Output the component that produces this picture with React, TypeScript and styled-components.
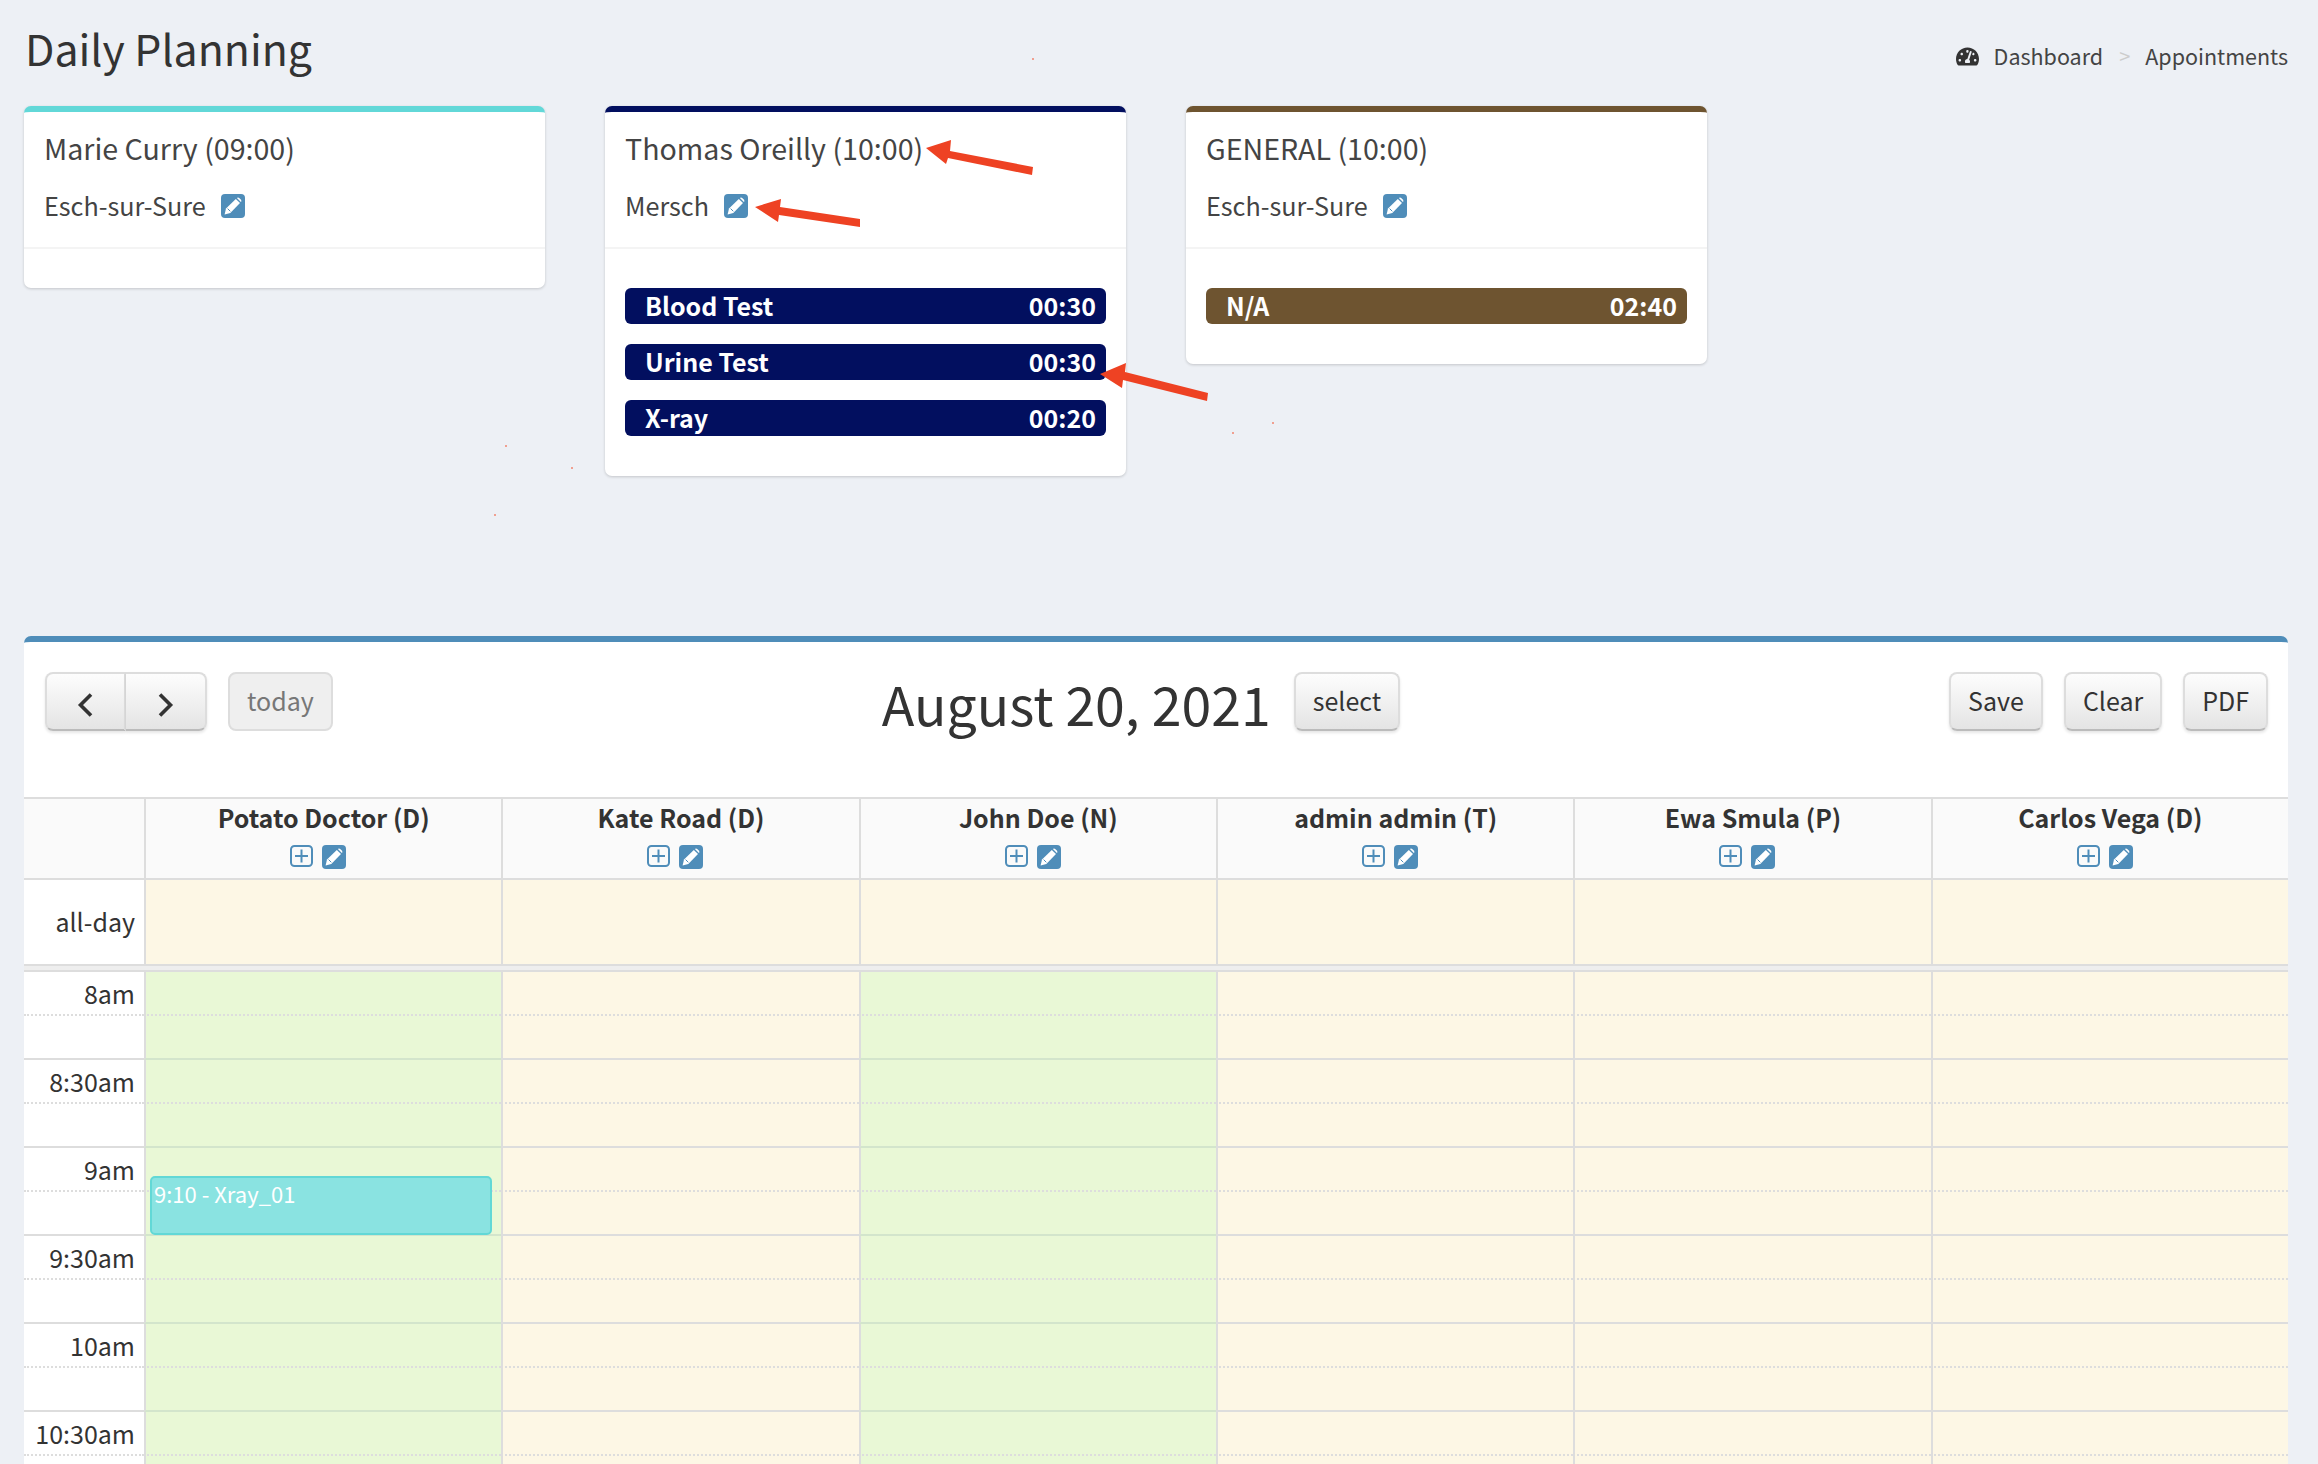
import React from "react";
import styled, { createGlobalStyle } from "styled-components";
import { FaTachometerAlt } from "react-icons/fa";

const GlobalStyle = createGlobalStyle`
  html, body {
    margin: 0;
    height: 1464px;
    overflow: hidden;
    background: #edf0f5;
    font-family: "Noto Sans CJK SC", "Noto Sans", sans-serif;
    color: #333;
  }
`;

const Page = styled.div`
  position: relative;
  width: 2318px;
  height: 1464px;
  overflow: hidden;
  padding: 0 30px 0 24px;
  box-sizing: border-box;
`;

const Header = styled.div`
  display: flex;
  justify-content: space-between;
  height: 106px;
`;

const Title = styled.h1`
  margin: 0;
  padding: 17px 0 0 1px;
  font-size: 42.8px;
  line-height: 60px;
  font-weight: 400;
  color: #333;
`;

const Breadcrumb = styled.div`
  display: flex;
  align-items: center;
  height: 32px;
  margin-top: 40px;
  font-size: 21.5px;
  line-height: 32px;
  color: #444;
  svg {
    font-size: 23px;
    margin-right: 15px;
    color: #333;
  }
`;

const Separator = styled.span`
  margin: 0 15px 0 16px;
  color: #ccc;
  font-size: 20px;
`;

const CardRow = styled.div`
  display: flex;
  align-items: flex-start;
  gap: 60px;
  height: 530px;
`;

const Card = styled.div<{ $color: string }>`
  width: 521px;
  background: #fff;
  border-top: 6px solid ${(p) => p.$color};
  border-radius: 7px;
  box-shadow: 0 1px 3px rgba(0, 0, 0, 0.18);
  box-sizing: border-box;
`;

const CardHead = styled.div`
  padding: 18px 20px 24px;
  border-bottom: 2px solid #f4f4f4;
`;

const CardName = styled.div`
  font-size: 28.6px;
  line-height: 36px;
  color: #444;
`;

const CardPlace = styled.div`
  display: flex;
  align-items: center;
  gap: 15px;
  margin-top: 21px;
  font-size: 25.2px;
  line-height: 36px;
  color: #444;
  svg {
    position: relative;
    top: 1px;
  }
`;

const CardEmpty = styled.div`
  height: 39px;
`;

const PillList = styled.div`
  display: flex;
  flex-direction: column;
  gap: 20px;
  padding: 39px 20px 40px;
`;

const Pill = styled.div<{ $color: string }>`
  display: flex;
  justify-content: space-between;
  align-items: center;
  height: 36px;
  padding: 0 10px 3px 20px;
  box-sizing: border-box;
  background: ${(p) => p.$color};
  border-radius: 6px;
  color: #fff;
  font-size: 25px;
  font-weight: 700;
`;

const Calendar = styled.div`
  background: #fff;
  border-top: 6px solid #4f8db9;
  border-radius: 7px 7px 0 0;
`;

const Toolbar = styled.div`
  display: flex;
  justify-content: space-between;
  align-items: flex-start;
  height: 155px;
  padding: 30px 20px 0 21px;
  box-sizing: border-box;
`;

const ToolGroup = styled.div`
  display: flex;
  gap: 21px;
`;

const Button = styled.div<{ $off?: boolean }>`
  display: flex;
  align-items: center;
  justify-content: center;
  height: 59px;
  padding: 0 17px 4px;
  box-sizing: border-box;
  border: 2px solid #ddd;
  border-bottom-color: ${(p) => (p.$off ? "#ddd" : "#bbb")};
  border-radius: 8px;
  font-size: 25px;
  line-height: 32px;
  color: ${(p) => (p.$off ? "#777" : "#333")};
  background: ${(p) =>
    p.$off ? "#efefef" : "linear-gradient(#fdfdfd, #e4e4e4)"};
  box-shadow: ${(p) => (p.$off ? "none" : "0 2px 3px rgba(0, 0, 0, 0.1)")};
`;

const NavGroup = styled.div`
  display: flex;
`;

const NavButton = styled(Button)<{ $side: "left" | "right" }>`
  width: 81px;
  padding: 6px 0 0;
  border-radius: ${(p) => (p.$side === "left" ? "8px 0 0 8px" : "0 8px 8px 0")};
  border-left-width: ${(p) => (p.$side === "left" ? "2px" : "0")};
`;

const CenterGroup = styled.div`
  display: flex;
  align-items: flex-start;
  gap: 23px;
`;

const DateTitle = styled.h2`
  margin: 0;
  font-size: 53.6px;
  line-height: 62px;
  font-weight: 400;
  color: #333;
`;

const GridRow = styled.div`
  display: grid;
  grid-template-columns: 120px repeat(6, 1fr);
`;

const HeadRow = styled(GridRow)`
  height: 83px;
  box-sizing: border-box;
  background: #fafafa;
  border-top: 2px solid #ddd;
  border-bottom: 2px solid #ddd;
`;

const HeadCell = styled.div`
  display: flex;
  flex-direction: column;
  align-items: center;
  border-left: 2px solid #ddd;
  padding-top: 1px;
`;

const DoctorName = styled.div`
  font-size: 25px;
  line-height: 34px;
  font-weight: 700;
  color: #333;
`;

const HeadIcons = styled.div`
  display: flex;
  align-items: flex-start;
  gap: 9px;
  margin: 11px 11px 0 0;
`;

const AllDayRow = styled(GridRow)`
  height: 84px;
  box-sizing: border-box;
`;

const Gutter = styled.div`
  height: 8px;
  box-sizing: border-box;
  background: #eee;
  border-top: 2px solid #ddd;
  border-bottom: 2px solid #ddd;
`;

const TimeLabel = styled.div<{ $minor?: boolean; $major?: boolean }>`
  padding-right: 9px;
  text-align: right;
  font-size: 25px;
  line-height: 42px;
  color: #333;
  box-sizing: border-box;
  border-bottom: ${(p) =>
    p.$minor ? "2px dotted #ddd" : p.$major ? "2px solid #ddd" : "none"};
`;

const AllDayLabel = styled(TimeLabel)`
  line-height: 82px;
`;

const SlotRow = styled(GridRow)`
  height: 44px;
`;

const SlotCell = styled.div<{ $open: boolean; $line?: "minor" | "major" }>`
  position: relative;
  box-sizing: border-box;
  border-left: 2px solid #ddd;
  background: ${(p) => (p.$open ? "#e9f8d6" : "#fdf7e5")};
  border-bottom: ${(p) =>
    p.$line === "minor"
      ? "2px dotted #ddd"
      : p.$line === "major"
        ? `2px solid ${p.$open ? "#d3e5cc" : "#ddd"}`
        : "none"};
`;

const EventBox = styled.div`
  position: absolute;
  top: 28px;
  left: 4px;
  width: 342px;
  height: 59px;
  padding: 0 2px;
  box-sizing: border-box;
  background: #8ae3e1;
  border: 2px solid #62d8d6;
  border-radius: 5px;
  color: #fff;
  font-size: 22px;
  line-height: 30px;
  z-index: 2;
`;

const Annotations = styled.svg`
  position: absolute;
  top: 0;
  left: 0;
  z-index: 5;
  pointer-events: none;
`;

function PencilSquare() {
  return (
    <svg width="24" height="24" viewBox="0 0 24 24">
      <rect width="24" height="24" rx="4" fill="#4f8db9" />
      <path d="M3.6 20.4 L5 14.6 L14.8 4.9 L19 9.1 L9.3 18.9 Z" fill="#fff" />
      <path d="M15.9 3.9 Q17 3 18.2 3.9 L20 5.7 Q20.9 6.9 20 8 L19.9 8.1 Z" fill="#fff" />
      <path d="M6.6 14.6 L9.3 17.3" stroke="#4f8db9" strokeWidth="1" fill="none" />
    </svg>
  );
}

function PlusSquare() {
  return (
    <svg width="23" height="22" viewBox="0 0 23 22">
      <rect x="1" y="1" width="21" height="20" rx="3.5" fill="none" stroke="#4f8db9" strokeWidth="2" />
      <path d="M11.5 4.5 V17.5 M5 11 H18" stroke="#4f8db9" strokeWidth="2" fill="none" />
    </svg>
  );
}

function Chevron({ left }: { left?: boolean }) {
  return (
    <svg width="18" height="24" viewBox="0 0 18 24">
      <path
        d={left ? "M14 1.5 L3.5 12 L14 22.5" : "M3 1.5 L13.5 12 L3 22.5"}
        fill="none"
        stroke="#333"
        strokeWidth="3.6"
      />
    </svg>
  );
}

const cards = [
  { name: "Marie Curry (09:00)", place: "Esch-sur-Sure", color: "#62d8d8", items: [] as string[][] },
  {
    name: "Thomas Oreilly (10:00)",
    place: "Mersch",
    color: "#020f5f",
    items: [
      ["Blood Test", "00:30"],
      ["Urine Test", "00:30"],
      ["X-ray", "00:20"],
    ],
  },
  { name: "GENERAL (10:00)", place: "Esch-sur-Sure", color: "#6e5430", items: [["N/A", "02:40"]] },
];

const doctors = [
  { name: "Potato Doctor (D)", open: true },
  { name: "Kate Road (D)", open: false },
  { name: "John Doe (N)", open: true },
  { name: "admin admin (T)", open: false },
  { name: "Ewa Smula (P)", open: false },
  { name: "Carlos Vega (D)", open: false },
];

const hours = ["8am", "8:30am", "9am", "9:30am", "10am", "10:30am"];

const arrows = [
  "M1033 167 L950 151 L951 140 L926 148 L946 164 L948 158 L1032 175 Z",
  "M860 219 L780 207 L781 199 L755 207 L778 222 L779 215 L860 227 Z",
  "M1208 393 L1125 372 L1126 363 L1100 374 L1122 388 L1123 380 L1207 401 Z",
];

const specks = [
  [1032, 58],
  [505, 445],
  [571, 467],
  [494, 514],
  [1232, 432],
  [1272, 422],
];

export default function App() {
  return (
    <Page>
      <GlobalStyle />
      <Header>
        <Title>Daily Planning</Title>
        <Breadcrumb>
          <FaTachometerAlt />
          Dashboard
          <Separator>&gt;</Separator>
          Appointments
        </Breadcrumb>
      </Header>

      <CardRow>
        {cards.map((c) => (
          <Card key={c.name} $color={c.color}>
            <CardHead>
              <CardName>{c.name}</CardName>
              <CardPlace>
                {c.place}
                <PencilSquare />
              </CardPlace>
            </CardHead>
            {c.items.length === 0 ? (
              <CardEmpty />
            ) : (
              <PillList>
                {c.items.map(([label, time]) => (
                  <Pill key={label} $color={c.color}>
                    <span>{label}</span>
                    <span>{time}</span>
                  </Pill>
                ))}
              </PillList>
            )}
          </Card>
        ))}
      </CardRow>

      <Calendar>
        <Toolbar>
          <ToolGroup>
            <NavGroup>
              <NavButton $side="left">
                <Chevron left />
              </NavButton>
              <NavButton $side="right">
                <Chevron />
              </NavButton>
            </NavGroup>
            <Button $off>today</Button>
          </ToolGroup>
          <CenterGroup>
            <DateTitle>August 20, 2021</DateTitle>
            <Button>select</Button>
          </CenterGroup>
          <ToolGroup>
            <Button>Save</Button>
            <Button>Clear</Button>
            <Button>PDF</Button>
          </ToolGroup>
        </Toolbar>

        <HeadRow>
          <div />
          {doctors.map((d) => (
            <HeadCell key={d.name}>
              <DoctorName>{d.name}</DoctorName>
              <HeadIcons>
                <PlusSquare />
                <PencilSquare />
              </HeadIcons>
            </HeadCell>
          ))}
        </HeadRow>

        <AllDayRow>
          <AllDayLabel>all-day</AllDayLabel>
          {doctors.map((d) => (
            <SlotCell key={d.name} $open={false} />
          ))}
        </AllDayRow>
        <Gutter />

        {hours.map((h) => (
          <React.Fragment key={h}>
            <SlotRow>
              <TimeLabel $minor>{h}</TimeLabel>
              {doctors.map((d, col) => (
                <SlotCell key={d.name} $open={d.open} $line="minor">
                  {h === "9am" && col === 0 && <EventBox>9:10 - Xray_01</EventBox>}
                </SlotCell>
              ))}
            </SlotRow>
            <SlotRow>
              <TimeLabel $major />
              {doctors.map((d) => (
                <SlotCell key={d.name} $open={d.open} $line="major" />
              ))}
            </SlotRow>
          </React.Fragment>
        ))}
      </Calendar>

      <Annotations width="2318" height="1464">
        {arrows.map((d) => (
          <path key={d} d={d} fill="#ee4223" />
        ))}
        {specks.map(([x, y]) => (
          <rect key={x} x={x} y={y} width="2" height="2" fill="#f0a090" />
        ))}
      </Annotations>
    </Page>
  );
}
